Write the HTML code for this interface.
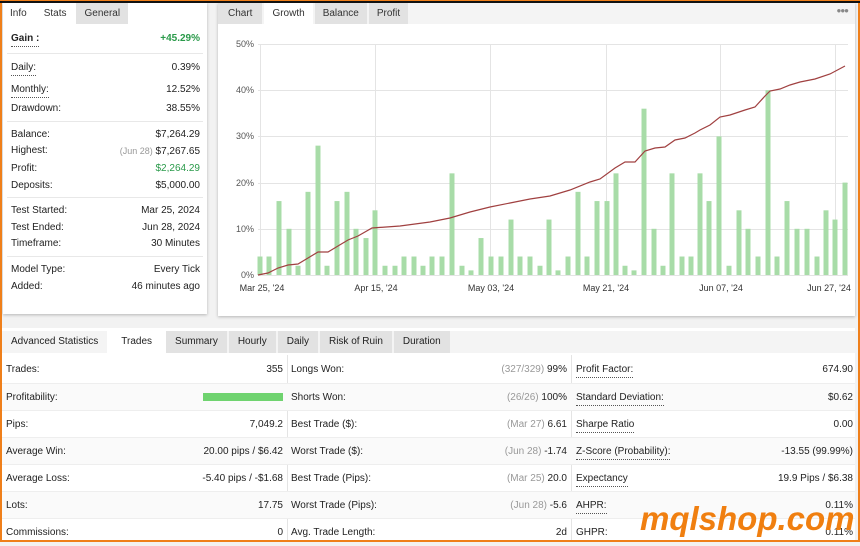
<!DOCTYPE html>
<html><head><meta charset="utf-8"><style>
*{box-sizing:border-box;margin:0;padding:0}
body{width:860px;height:542px;overflow:hidden;background:#f2f2f2;font-family:"Liberation Sans",sans-serif;font-size:10px;color:#222;position:relative}
.frame{position:absolute;left:0;top:0;width:860px;height:542px;border:2px solid #ef7f1a;border-top:3px solid #ef7f1a;pointer-events:none;z-index:5}
.topbar{position:absolute;left:0;top:0;width:860px;height:3px;background:#111;z-index:6;border-top:1px solid #ef7f1a}
.panel{position:absolute;background:#fff;box-shadow:0 1px 3px rgba(0,0,0,.25)}
.tabs{position:absolute;left:0;top:0;height:21px;display:flex}
.tab{height:21px;line-height:21px;padding:0 8px;background:#e2e2e2;color:#333;margin-right:2px}
.tab.on{background:#fff}
.tab.pl{background:transparent}
.row{position:absolute;left:8px;right:7px;height:14px;line-height:14px}
.row .l{position:absolute;left:0}
.row .r{position:absolute;right:0}
.u{border-bottom:1px dotted #555}
.g{color:#2a9a4a}
.gr{color:#999}
.sep{position:absolute;left:4px;right:4px;height:1px;background:#e8e8e8}
.bt{position:absolute;left:2px;width:853px;height:27px;line-height:27px}
.cell{position:absolute;top:0;height:27px}
</style></head><body>
<div class="topbar"></div>
<div class="frame"></div>

<div class="panel" style="left:3px;top:3px;width:204px;height:311px">
 <div class="tabs" style="left:0"><div class="tab pl" style="padding:0 7px">Info</div><div class="tab on" style="padding:0 8px">Stats</div><div class="tab">General</div></div>
 <div class="row" style="top:29px"><span class="l u" style="font-weight:bold">Gain :</span><span class="r g" style="font-weight:bold">+45.29%</span></div>
 <div class="sep" style="top:50px"></div>
 <div class="row" style="top:58px"><span class="l u">Daily:</span><span class="r">0.39%</span></div>
 <div class="row" style="top:80px"><span class="l u">Monthly:</span><span class="r">12.52%</span></div>
 <div class="row" style="top:99px"><span class="l">Drawdown:</span><span class="r">38.55%</span></div>
 <div class="sep" style="top:118px"></div>
 <div class="row" style="top:125px"><span class="l">Balance:</span><span class="r">$7,264.29</span></div>
 <div class="row" style="top:141px"><span class="l">Highest:</span><span class="r"><span class="gr" style="font-size:9px">(Jun 28)</span> $7,267.65</span></div>
 <div class="row" style="top:159px"><span class="l">Profit:</span><span class="r g">$2,264.29</span></div>
 <div class="row" style="top:176px"><span class="l">Deposits:</span><span class="r">$5,000.00</span></div>
 <div class="sep" style="top:194px"></div>
 <div class="row" style="top:201px"><span class="l">Test Started:</span><span class="r">Mar 25, 2024</span></div>
 <div class="row" style="top:218px"><span class="l">Test Ended:</span><span class="r">Jun 28, 2024</span></div>
 <div class="row" style="top:234px"><span class="l">Timeframe:</span><span class="r">30 Minutes</span></div>
 <div class="sep" style="top:253px"></div>
 <div class="row" style="top:260px"><span class="l">Model Type:</span><span class="r">Every Tick</span></div>
 <div class="row" style="top:277px"><span class="l">Added:</span><span class="r">46 minutes ago</span></div>
</div>

<div class="panel" style="left:218px;top:3px;width:637px;height:313px">
 <div style="position:absolute;left:0;top:0;width:637px;height:21px;background:#f4f4f4"></div>
 <div class="tabs"><div class="tab" style="padding:0 10px">Chart</div><div class="tab on">Growth</div><div class="tab">Balance</div><div class="tab">Profit</div></div>
 <div style="position:absolute;right:7px;top:3px;color:#888;font-size:8px;letter-spacing:-1px">●●●</div>
</div>

<svg style="position:absolute;left:0;top:0" width="860" height="320">
 <g stroke="#e4e4e4" stroke-width="1">
  <line x1="258" y1="44.5" x2="848" y2="44.5"/><line x1="258" y1="90.5" x2="848" y2="90.5"/>
  <line x1="258" y1="136.5" x2="848" y2="136.5"/><line x1="258" y1="183.5" x2="848" y2="183.5"/>
  <line x1="258" y1="229.5" x2="848" y2="229.5"/><line x1="258" y1="275.5" x2="848" y2="275.5"/>
  <line x1="260.5" y1="44" x2="260.5" y2="276"/><line x1="375.5" y1="44" x2="375.5" y2="276"/>
  <line x1="490.5" y1="44" x2="490.5" y2="276"/><line x1="606.5" y1="44" x2="606.5" y2="276"/>
  <line x1="720.5" y1="44" x2="720.5" y2="276"/><line x1="835.5" y1="44" x2="835.5" y2="276"/>
 </g>
 <g fill="#555" font-family="Liberation Sans,sans-serif" font-size="9" text-anchor="end">
  <text x="254" y="47">50%</text><text x="254" y="93">40%</text><text x="254" y="139">30%</text>
  <text x="254" y="186">20%</text><text x="254" y="232">10%</text><text x="254" y="278">0%</text>
 </g>
 <g fill="#333" font-family="Liberation Sans,sans-serif" font-size="9" text-anchor="middle">
  <text x="262" y="291">Mar 25, '24</text><text x="376" y="291">Apr 15, '24</text><text x="491" y="291">May 03, '24</text>
  <text x="606" y="291">May 21, '24</text><text x="721" y="291">Jun 07, '24</text><text x="829" y="291">Jun 27, '24</text>
 </g>
 <g fill="#a8dca8" id="bars"></g>
 <polyline fill="none" stroke="#a04040" stroke-width="1.2" points="258,275 268,273 278,268 288,265 298,264 308,258 318,252 328,252 338,246 348,240 358,236 372,228 400,226 430,222 450,218 470,212 490,207 510,203 530,199 550,196 570,190 590,182 600,179 615,168 625,162 635,162 645,151 655,148 665,147 675,140 685,138 695,133 700,130 710,125 720,117 730,115 745,110 755,107 765,96 770,91 780,89 790,85 800,82 815,79 830,74 845,66"/>
</svg>
<script>
var d=[[260,4],[269,4],[279,16],[289,10],[298,2],[308,18],[318,28],[327,2],[337,16],[347,18],[356,10],[366,8],[375,14],[385,2],[395,2],[404,4],[414,4],[423,2],[432,4],[442,4],[452,22],[462,2],[471,1],[481,8],[491,4],[501,4],[511,12],[520,4],[530,4],[540,2],[549,12],[558,1],[568,4],[578,18],[587,4],[597,16],[607,16],[616,22],[625,2],[634,1],[644,36],[654,10],[663,2],[672,22],[682,4],[691,4],[700,22],[709,16],[719,30],[729,2],[739,14],[748,10],[758,4],[768,40],[777,4],[787,16],[797,10],[807,10],[817,4],[826,14],[835,12],[845,20]];
var g=document.getElementById('bars'),s='';
d.forEach(function(b){var h=b[1]*4.62;s+='<rect x="'+(b[0]-2.5)+'" y="'+(275-h)+'" width="5" height="'+h+'"/>';});
g.innerHTML=s;
</script>

<div style="position:absolute;left:2px;top:328px;width:853px;height:214px;background:#fff"></div>
<div style="position:absolute;left:2px;top:331px;width:853px;height:22px;background:#f4f4f4"></div>
<div style="position:absolute;left:2px;top:331px;height:22px;display:flex;line-height:22px">
 <div style="padding:0 9px;background:#f4f4f4">Advanced Statistics</div>
 <div style="padding:0 14px;background:#fff">Trades</div>
 <div style="padding:0 9px;background:#e2e2e2;margin-right:2px">Summary</div>
 <div style="padding:0 9px;background:#e2e2e2;margin-right:2px">Hourly</div>
 <div style="padding:0 9px;background:#e2e2e2;margin-right:2px">Daily</div>
 <div style="padding:0 9px;background:#e2e2e2;margin-right:2px">Risk of Ruin</div>
 <div style="padding:0 9px;background:#e2e2e2">Duration</div>
</div>
<div style="position:absolute;left:287px;top:355px;width:1px;height:187px;background:#e4e4e4"></div>
<div style="position:absolute;left:571px;top:355px;width:1px;height:187px;background:#e4e4e4"></div>

<div style="position:absolute;left:0;top:356px;width:860px;font-size:10px">
 <div class="bt" style="top:0"><span class="cell" style="left:4px">Trades:</span><span class="cell" style="right:572px">355</span><span class="cell" style="left:289px">Longs Won:</span><span class="cell" style="right:288px"><span class="gr">(327/329)</span> 99%</span><span class="cell u" style="left:574px;height:17px;top:5px;line-height:17px">Profit Factor:</span><span class="cell" style="right:2px">674.90</span></div>
 <div class="bt" style="top:27px;border-top:1px solid #eee;background:#fafafa"><span class="cell" style="left:4px">Profitability:</span><span style="position:absolute;left:201px;top:9px;width:80px;height:8px;background:#6fd36f"></span><span class="cell" style="left:289px">Shorts Won:</span><span class="cell" style="right:288px"><span class="gr">(26/26)</span> 100%</span><span class="cell u" style="left:574px;height:17px;top:5px;line-height:17px">Standard Deviation:</span><span class="cell" style="right:2px">$0.62</span></div>
 <div class="bt" style="top:54px;border-top:1px solid #eee"><span class="cell" style="left:4px">Pips:</span><span class="cell" style="right:572px">7,049.2</span><span class="cell" style="left:289px">Best Trade ($):</span><span class="cell" style="right:288px"><span class="gr">(Mar 27)</span> 6.61</span><span class="cell u" style="left:574px;height:17px;top:5px;line-height:17px">Sharpe Ratio</span><span class="cell" style="right:2px">0.00</span></div>
 <div class="bt" style="top:81px;border-top:1px solid #eee;background:#fafafa"><span class="cell" style="left:4px">Average Win:</span><span class="cell" style="right:572px">20.00 pips / $6.42</span><span class="cell" style="left:289px">Worst Trade ($):</span><span class="cell" style="right:288px"><span class="gr">(Jun 28)</span> -1.74</span><span class="cell u" style="left:574px;height:17px;top:5px;line-height:17px">Z-Score (Probability):</span><span class="cell" style="right:2px">-13.55 (99.99%)</span></div>
 <div class="bt" style="top:108px;border-top:1px solid #eee"><span class="cell" style="left:4px">Average Loss:</span><span class="cell" style="right:572px">-5.40 pips / -$1.68</span><span class="cell" style="left:289px">Best Trade (Pips):</span><span class="cell" style="right:288px"><span class="gr">(Mar 25)</span> 20.0</span><span class="cell u" style="left:574px;height:17px;top:5px;line-height:17px">Expectancy</span><span class="cell" style="right:2px">19.9 Pips / $6.38</span></div>
 <div class="bt" style="top:135px;border-top:1px solid #eee;background:#fafafa"><span class="cell" style="left:4px">Lots:</span><span class="cell" style="right:572px">17.75</span><span class="cell" style="left:289px">Worst Trade (Pips):</span><span class="cell" style="right:288px"><span class="gr">(Jun 28)</span> -5.6</span><span class="cell u" style="left:574px;height:17px;top:5px;line-height:17px">AHPR:</span><span class="cell" style="right:2px">0.11%</span></div>
 <div class="bt" style="top:162px;border-top:1px solid #eee"><span class="cell" style="left:4px">Commissions:</span><span class="cell" style="right:572px">0</span><span class="cell" style="left:289px">Avg. Trade Length:</span><span class="cell" style="right:288px">2d</span><span class="cell" style="left:574px">GHPR:</span><span class="cell" style="right:2px">0.11%</span></div>
</div>

<div style="position:absolute;left:640px;top:500px;font-family:'Liberation Sans',sans-serif;font-weight:bold;font-style:italic;font-size:33px;color:#f07f10;line-height:38px;z-index:4">mqlshop.com</div>
</body></html>
